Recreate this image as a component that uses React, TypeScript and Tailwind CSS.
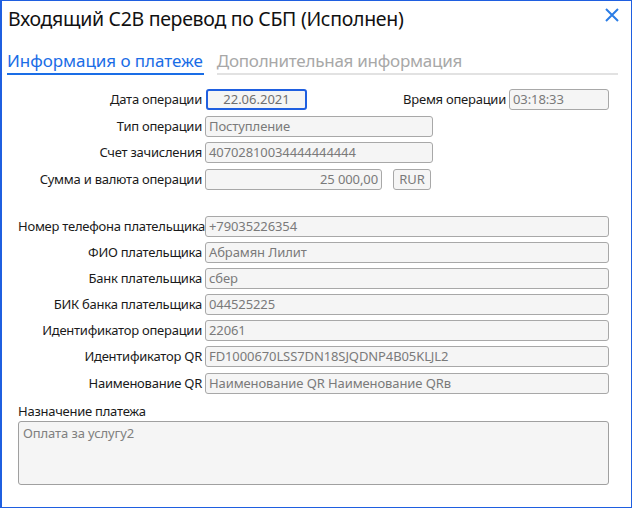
import React from "react";

const font = { fontFamily: '"Noto Sans", "Open Sans", sans-serif' };

function Label({ children, w = "w-[184px]" }: { children: React.ReactNode; w?: string }) {
  return (
    <div className={`${w} shrink-0 text-right text-[13px] tracking-[-0.25px] leading-[21px] text-[#1a1a1a] whitespace-nowrap`}>
      {children}
    </div>
  );
}

function Field({
  value,
  w = "w-[228px]",
  align = "text-left",
}: {
  value: string;
  w?: string;
  align?: string;
}) {
  return (
    <div
      className={`${w} h-[21px] shrink-0 rounded-[3px] border border-[#a8a8a8] bg-[#f5f5f5] px-[3px] text-[13px] tracking-[-0.1px] leading-[19px] text-[#7a7a7a] whitespace-nowrap overflow-hidden ${align}`}
    >
      {value}
    </div>
  );
}

export default function App() {
  return (
    <div
      style={font}
      className="w-[632px] h-[508px] bg-white border border-[#1f5fe0] border-l-2 relative overflow-hidden"
    >
      <div className="flex items-start justify-between pl-[6px] pr-[22px] pt-[5px]">
        <div className="text-[19.5px] leading-[26px] text-[#111] tracking-[-0.3px]">
          Входящий C2B перевод по СБП (Исполнен)
        </div>
        <svg width="14" height="14" viewBox="0 0 14 14" className="mt-[2px] -mr-[10px]">
          <path d="M1 1 L13 13 M13 1 L1 13" stroke="#2b7de6" strokeWidth="2" />
        </svg>
      </div>

      <div className="flex items-end pl-[5px] pr-[13px] mt-[18px]">
        <div className="text-[17px] leading-[22px] text-[#1a6de6] border-b-2 border-[#1a6de6] pb-[1px] pr-[1px] tracking-[-0.05px]">
          Информация о платеже
        </div>
        <div className="flex-1 ml-[13px] border-b-2 border-[#e2e2e2] pb-[1px] text-[17px] leading-[22px] text-[#a8a8a8] tracking-[-0.25px]">
          Дополнительная информация
        </div>
      </div>

      <div className="pl-[16px] pr-[22px] mt-[14px] flex flex-col">
        <div className="flex flex-col gap-[5.5px]">
          <div className="flex items-center gap-[3px]">
            <Label>Дата операции</Label>
            <div className="ml-[1px] w-[102px] h-[21px] rounded-[3px] border-2 border-[#1f5fe0] bg-[#f5f5f5] text-center text-[13px] leading-[17px] text-[#6f6f6f]">
              22.06.2021
            </div>
            <Label w="w-[196px]">Время операции</Label>
            <Field value="03:18:33" w="w-[100px]" />
          </div>
          <div className="flex items-center gap-[3px]">
            <Label>Тип операции</Label>
            <Field value="Поступление" />
          </div>
          <div className="flex items-center gap-[3px]">
            <Label>Счет зачисления</Label>
            <Field value="40702810034444444444" />
          </div>
          <div className="flex items-center gap-[3px]">
            <Label>Сумма и валюта операции</Label>
            <Field value="25 000,00" w="w-[177px]" align="text-right" />
            <div className="ml-[8px] w-[38px] h-[21px] rounded-[3px] border border-[#a8a8a8] bg-[#f5f5f5] text-center text-[13px] leading-[19px] text-[#7a7a7a]">
              RUR
            </div>
          </div>
        </div>

        <div className="flex flex-col gap-[5.2px] mt-[26px]">
          {[
            ["Номер телефона плательщика", "+79035226354"],
            ["ФИО плательщика", "Абрамян Лилит"],
            ["Банк плательщика", "сбер"],
            ["БИК банка плательщика", "044525225"],
            ["Идентификатор операции", "22061"],
            ["Идентификатор QR", "FD1000670LSS7DN18SJQDNP4B05KLJL2"],
            ["Наименование QR", "Наименование QR Наименование QRв"],
          ].map(([l, v]) => (
            <div key={l} className="flex items-center gap-[3px]">
              <Label>{l}</Label>
              <Field value={v} w="flex-1" />
            </div>
          ))}
        </div>

        <div className="mt-[8px] text-[13px] leading-[18px] text-[#1a1a1a] tracking-[-0.25px]">Назначение платежа</div>
        <div className="mt-[1px] h-[64px] rounded-[3px] border border-[#a0a0a0] bg-[#f5f5f5] px-[4px] py-[2px] text-[13px] leading-[18px] text-[#808080] tracking-[-0.1px]">
          Оплата за услугу2
        </div>
      </div>
    </div>
  );
}
